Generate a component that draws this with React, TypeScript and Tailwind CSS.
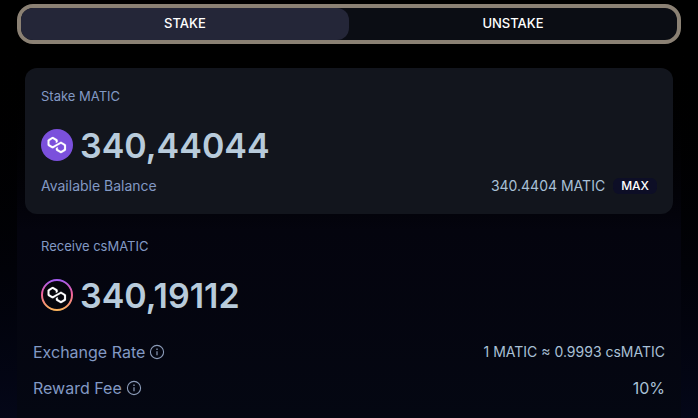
import { useState } from 'react'
import type { ReactNode } from 'react'

const POLYGON_PATH =
    'M29,10.2c-0.7-0.4-1.6-0.4-2.4,0L21,13.5l-3.8,2.1l-5.5,3.3c-0.7,0.4-1.6,0.4-2.4,0L5,16.3c-0.7-0.4-1.2-1.2-1.2-2.1v-5c0-0.8,0.4-1.6,1.2-2.1l4.3-2.5c0.7-0.4,1.6-0.4,2.4,0L16,7.2c0.7,0.4,1.2,1.2,1.2,2.1v3.3l3.8-2.2V7c0-0.8-0.4-1.6-1.2-2.1l-8-4.7c-0.7-0.4-1.6-0.4-2.4,0L1.2,5C0.4,5.4,0,6.2,0,7v9.4c0,0.8,0.4,1.6,1.2,2.1l8.1,4.7c0.7,0.4,1.6,0.4,2.4,0l5.5-3.2l3.8-2.2l5.5-3.2c0.7-0.4,1.6-0.4,2.4,0l4.3,2.5c0.7,0.4,1.2,1.2,1.2,2.1v5c0,0.8-0.4,1.6-1.2,2.1L29,28.8c-0.7,0.4-1.6,0.4-2.4,0l-4.3-2.5c-0.7-0.4-1.2-1.2-1.2-2.1V21l-3.8,2.2v3.3c0,0.8,0.4,1.6,1.2,2.1l8.1,4.7c0.7,0.4,1.6,0.4,2.4,0l8.1-4.7c0.7-0.4,1.2-1.2,1.2-2.1V17c0-0.8-0.4-1.6-1.2-2.1L29,10.2z'

function MaticIcon() {
    return (
        <svg viewBox="0 0 32 32" className="size-8 shrink-0" aria-hidden="true">
            <circle cx="16" cy="16" r="16" fill="#7b50dc" />
            <path
                d={POLYGON_PATH}
                transform="translate(6.6 8) scale(0.48)"
                fill="#fff"
                stroke="#fff"
                strokeWidth="0.4"
            />
        </svg>
    )
}

function CsMaticIcon() {
    return (
        <svg viewBox="0 0 32 32" className="size-8 shrink-0" aria-hidden="true">
            <defs>
                <linearGradient id="ring" x1="0" y1="0" x2="0" y2="1">
                    <stop offset="0" stopColor="#a45cf0" />
                    <stop offset="0.45" stopColor="#f0609c" />
                    <stop offset="1" stopColor="#fbb45c" />
                </linearGradient>
            </defs>
            <circle
                cx="16"
                cy="16"
                r="15"
                fill="#05060c"
                stroke="url(#ring)"
                strokeWidth="2"
            />
            <path
                d={POLYGON_PATH}
                transform="translate(6.6 8) scale(0.48)"
                fill="#fff"
                stroke="#fff"
                strokeWidth="0.4"
            />
        </svg>
    )
}

function InfoIcon() {
    return (
        <svg
            viewBox="0 0 16 16"
            className="size-4"
            fill="none"
            stroke="#8b9bb8"
            aria-hidden="true"
        >
            <circle cx="8" cy="8" r="6.6" strokeWidth="1.1" />
            <path d="M8 7.2v4" strokeWidth="1.2" />
            <path d="M8 4.6v1.3" strokeWidth="1.3" />
        </svg>
    )
}

function InfoRow({ label, children }: { label: string; children: ReactNode }) {
    return (
        <div className="flex h-9 items-center justify-between">
            <div className="flex items-center gap-1 text-[#8299c4]">
                {label}
                <button type="button" aria-label={`About ${label}`}>
                    <InfoIcon />
                </button>
            </div>
            {children}
        </div>
    )
}

export default function App() {
    const [tab, setTab] = useState('stake')
    const [amount, setAmount] = useState('340,44044')

    const tabClass = (name: string) =>
        name === tab
            ? 'flex-1 rounded-xl bg-[#242638]'
            : 'flex-1 rounded-xl'

    return (
        <main className="min-h-screen bg-linear-to-b from-black to-[#040718] px-[17px] pt-1 font-['Inter',sans-serif] text-[#a9c0d6]">
            <div className="flex h-10 rounded-2xl border-4 border-[#8b8174] bg-[#0b0d14] text-[13px] font-medium text-white">
                <button
                    type="button"
                    className={tabClass('stake')}
                    onClick={() => setTab('stake')}
                >
                    STAKE
                </button>
                <button
                    type="button"
                    className={tabClass('unstake')}
                    onClick={() => setTab('unstake')}
                >
                    UNSTAKE
                </button>
            </div>

            <div className="bg-linear-to-b from-black via-[#04040e] to-[#040712] px-2 pt-6 pb-3">
                <section className="rounded-xl bg-[#12151d] p-4">
                    <label
                        htmlFor="amount"
                        className="block text-[13px] leading-6 text-[#8299c4]"
                    >
                        Stake MATIC
                    </label>
                    <div className="mt-3 flex h-[50px] items-center gap-[7px]">
                        <MaticIcon />
                        <input
                            id="amount"
                            className="w-full min-w-0 bg-transparent text-[34px] font-semibold text-[#b8cbdb] outline-none"
                            value={amount}
                            onChange={(e) => setAmount(e.target.value)}
                        />
                    </div>
                    <div className="mt-1 flex h-6 items-center justify-between text-sm">
                        <span className="text-[#8299c4]">Available Balance</span>
                        <div className="flex items-center gap-2">
                            340.4404 MATIC
                            <button
                                type="button"
                                className="rounded-md bg-[#0d0e26] px-2 text-xs leading-4 font-medium text-white"
                                onClick={() => setAmount('340,44044')}
                            >
                                MAX
                            </button>
                        </div>
                    </div>
                </section>

                <section className="px-4 pt-5">
                    <h2 className="text-[13px] leading-6 text-[#8299c4]">
                        Receive csMATIC
                    </h2>
                    <div className="mt-3 flex h-[50px] items-center gap-[7px]">
                        <CsMaticIcon />
                        <output
                            htmlFor="amount"
                            className="text-[34px] font-semibold text-[#b8cbdb]"
                        >
                            340,19112
                        </output>
                    </div>
                </section>

                <section className="mt-[14px] px-2">
                    <InfoRow label="Exchange Rate">
                        <span className="text-sm">1 MATIC ≈ 0.9993 csMATIC</span>
                    </InfoRow>
                    <InfoRow label="Reward Fee">
                        <span>10%</span>
                    </InfoRow>
                </section>
            </div>
        </main>
    )
}
